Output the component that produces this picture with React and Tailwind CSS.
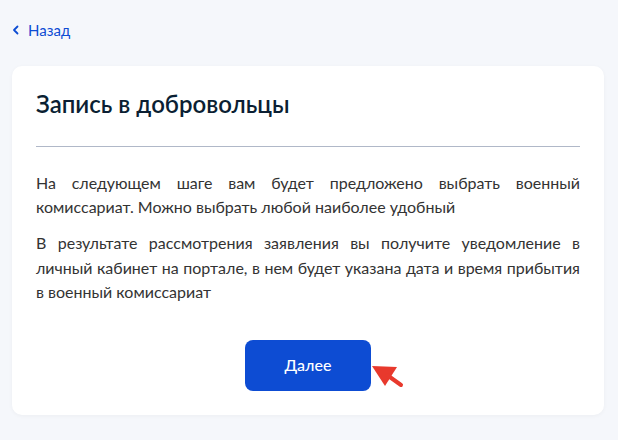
import React from "react";

export default function App() {
  return (
    <div
      className="min-h-screen bg-[#f5f7fb] px-3 pt-[18px] pb-6"
      style={{ fontFamily: "Lato, 'Noto Sans', sans-serif" }}
    >
      {/* Back link */}
      <button className="flex items-center gap-[8px] h-6 text-[15px] text-[#0d4cd3]">
        <svg width="8" height="10" viewBox="0 0 8 10">
          <path
            d="M5.5 1.5 L2 5 L5.5 8.5"
            fill="none"
            stroke="#0d4cd3"
            strokeWidth="1.8"
            strokeLinecap="round"
            strokeLinejoin="round"
          />
        </svg>
        <span>Назад</span>
      </button>

      {/* Card */}
      <div className="mt-6 bg-white rounded-[10px] px-6 pt-6 pb-6 shadow-[0_1px_4px_rgba(0,0,0,0.04)] w-[592px]">
        <h1 className="text-[24px] leading-7 font-semibold text-[#0b1f33]">
          Запись в добровольцы
        </h1>

        <div className="mt-7 h-px bg-[#b0b8c8]" />

        <div className="mt-6 text-[16px] leading-6 text-[#333] text-justify">
          <p>
            На следующем шаге вам будет предложено выбрать военный
            комиссариат. Можно выбрать любой наиболее удобный
          </p>
          <p className="mt-3 leading-[24.5px]">
            В результате рассмотрения заявления вы получите уведомление в
            личный кабинет на портале, в нем будет указана дата и время
            прибытия в военный комиссариат
          </p>
        </div>

        <div className="mt-[35px] flex justify-center">
          <div className="relative">
            <button className="w-[126px] h-[51px] rounded-lg bg-[#0d4cd3] text-white text-[16px] font-medium">
              Далее
            </button>
            <svg
              className="absolute left-[126px] top-[24px]"
              width="34"
              height="26"
              viewBox="0 0 34 26"
            >
              <polygon points="1,2 26,3 14,22" fill="#e8392d" />
              <line
                x1="16"
                y1="11"
                x2="30"
                y2="21"
                stroke="#e8392d"
                strokeWidth="4"
                strokeLinecap="round"
              />
            </svg>
          </div>
        </div>
      </div>
    </div>
  );
}
